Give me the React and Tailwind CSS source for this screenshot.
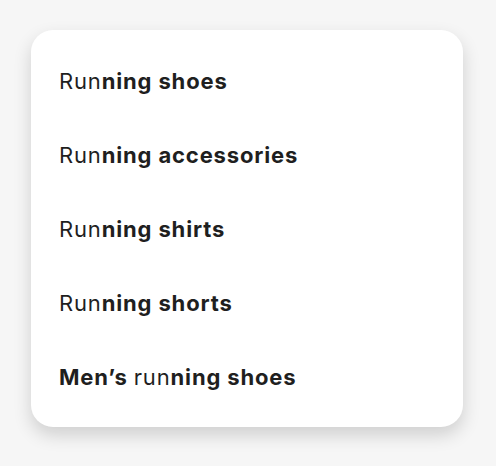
const items = [
  [["Run", false], ["ning shoes", true]],
  [["Run", false], ["ning accessories", true]],
  [["Run", false], ["ning shirts", true]],
  [["Run", false], ["ning shorts", true]],
  [["Men’s ", true], ["run", false], ["ning shoes", true]],
];

export default function App() {
  return (
    <div className="min-h-[466px] w-[496px] bg-[#f6f6f6] pt-[30px] pl-[31px]" style={{ fontFamily: "Inter, 'Noto Sans', sans-serif" }}>
      <ul className="w-[432px] rounded-[22px] bg-white pt-[14px] pb-[13px] shadow-[0_8px_18px_rgba(0,0,0,0.16)]">
        {items.map((parts, i) => (
          <li key={i} className="flex h-[74px] items-center pl-[28px] text-[22px] tracking-[0.85px] text-[#1f1f1f]">
            {parts.map(([t, bold], j) => (
              <span key={j} className={bold ? "font-bold whitespace-pre" : "font-normal whitespace-pre"}>
                {t}
              </span>
            ))}
          </li>
        ))}
      </ul>
    </div>
  );
}
